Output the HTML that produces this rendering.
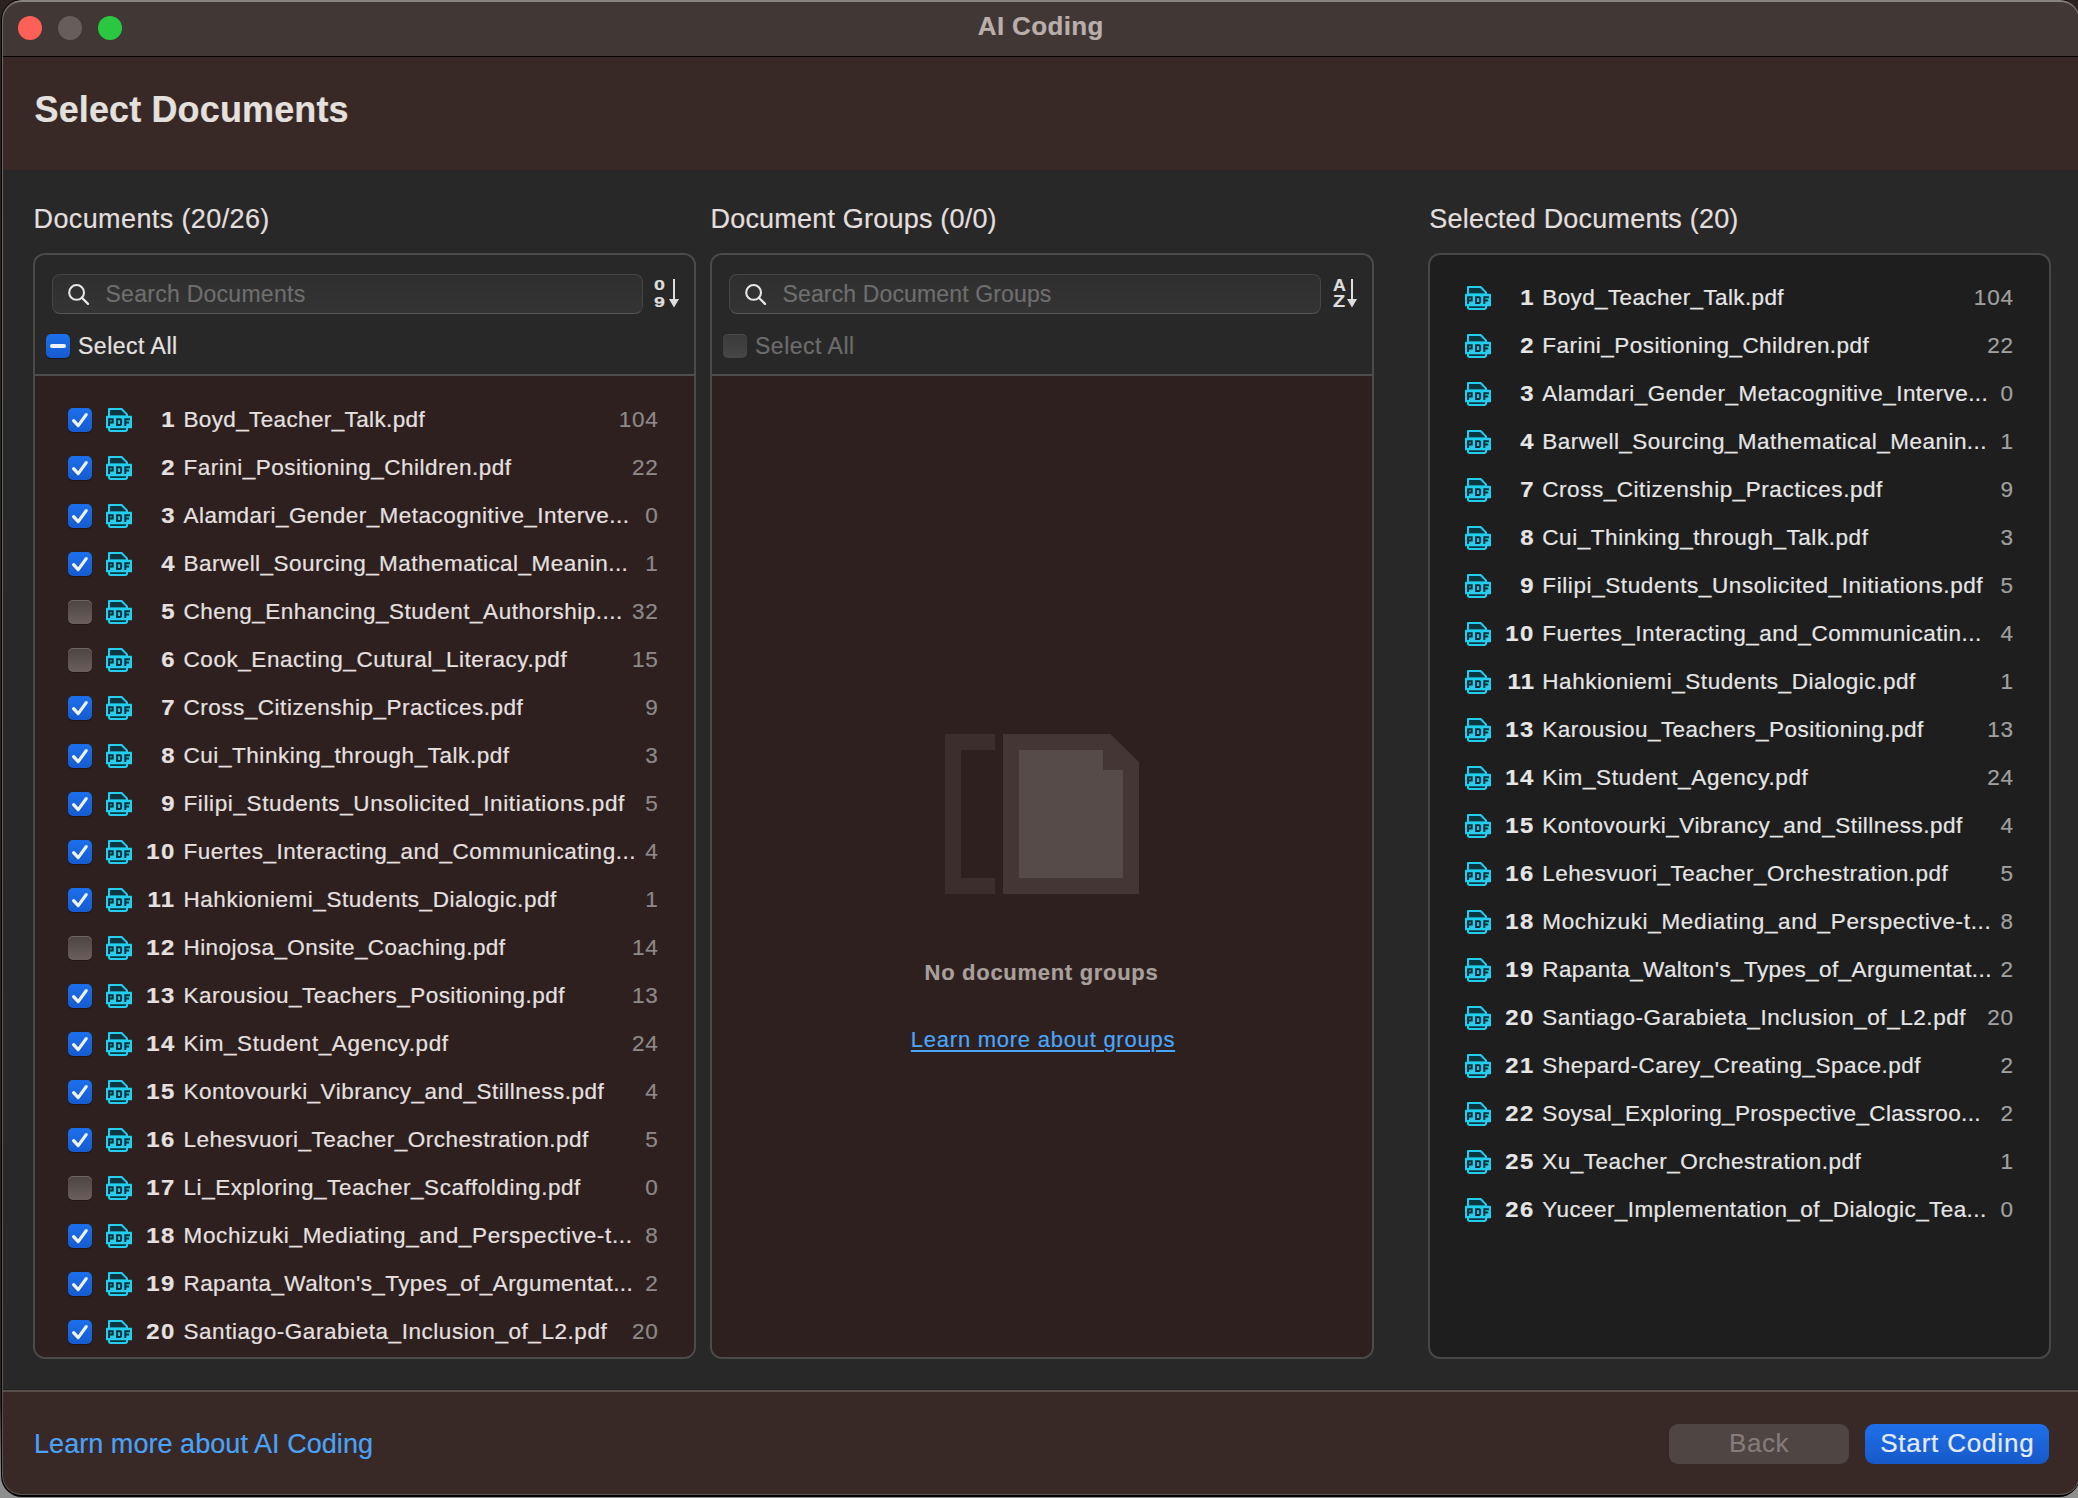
<!DOCTYPE html><html><head><meta charset="utf-8"><title>AI Coding</title><style>
html,body{margin:0;padding:0;}
body{width:2078px;height:1498px;overflow:hidden;position:relative;background:linear-gradient(#2b2320 0,#2b2320 1400px,#8e8e8e 1480px);font-family:"Liberation Sans", sans-serif;}
.t{position:absolute;white-space:pre;-webkit-text-stroke:0.2px currentColor;}
#winblack{position:absolute;left:0.8px;top:-1px;width:2079px;height:1497.5px;background:#000;border-radius:21px;}
#win{position:absolute;left:2px;top:0px;width:2078px;height:1495px;border-radius:20px;overflow:hidden;background:linear-gradient(#8a8481 0px,#8a8481 2px,#6f6764 3px,#5d5452 100%);}
#titlebar{position:absolute;left:3px;top:1.5px;width:2076px;height:54.5px;background:#413735;border-radius:19px 19px 0 0;}
#tbline{position:absolute;left:3px;top:56px;width:2076px;height:1px;background:#050404;}
#header{position:absolute;left:3px;top:57px;width:2076px;height:113px;background:#382927;}
#content{position:absolute;left:3px;top:170px;width:2076px;height:1219px;background:#282828;}
#ftsep1{position:absolute;left:3px;top:1389px;width:2076px;height:1px;background:#232222;}
#ftsep2{position:absolute;left:3px;top:1390px;width:2076px;height:2px;background:#574d4a;}
#footer{position:absolute;left:3px;top:1392px;width:2076px;height:101.5px;background:#382826;border-radius:0 0 19px 19px;}
.tl{position:absolute;width:24px;height:24px;border-radius:12px;}
.panel{position:absolute;box-sizing:border-box;border:2px solid #4d4b4a;border-radius:12px;overflow:hidden;background:#282828;}
.panel .ptop{position:absolute;left:0;top:0;right:0;height:119px;background:#282828;}
.panel .plist{position:absolute;left:0;top:119px;right:0;bottom:0;background:#2e201f;border-top:2px solid #4e4e4e;}
.panel.p3{background:#1e1e1e;border-color:#474747;}
.search{position:absolute;box-sizing:border-box;height:40px;border-radius:8px;background:linear-gradient(#2f2f2f,#343434);border:1.5px solid #454545;border-bottom-color:#555;}
.cb{position:absolute;width:24px;height:24px;border-radius:5px;box-sizing:border-box;}
.cb svg{position:absolute;left:0;top:0;}
.cb.on,.cb.mixed{background:linear-gradient(#1c70ec,#165bcf);box-shadow:0 0.5px 1px rgba(0,0,0,0.4);}
.cb.off{background:linear-gradient(#4d4442,#6a5f5d);box-shadow:inset 0 1px 0 #6e6462, 0 0.5px 1px rgba(0,0,0,0.3);}
.cb.dis{background:linear-gradient(#3a3a3a,#474747);box-shadow:inset 0 1px 0 #4a4a4a;}
.dash{position:absolute;left:4px;top:10px;width:16px;height:4px;border-radius:2px;background:#eef2fa;}
.pdf{position:absolute;left:0;top:0;}
.btn{position:absolute;border-radius:9px;}
.btn.back{background:#4f4543;}
.btn.start{background:linear-gradient(#1f6fea,#1659c8);}
</style></head><body><div id="winblack"></div><div id="win"></div><div id="titlebar"></div><div id="tbline"></div><div id="header"></div><div id="content"></div><div id="ftsep1"></div><div id="ftsep2"></div><div id="footer"></div><div class="tl" style="left:18px;top:16px;background:#fe5f57"></div><div class="tl" style="left:58px;top:16px;background:#675e5c"></div><div class="tl" style="left:98px;top:16px;background:#29c840"></div><div class="t" style="left:440.80px;width:1200px;text-align:center;top:13.29px;font-size:26px;line-height:26px;color:#b9aeab;font-weight:700;letter-spacing:0.37px;">AI Coding</div><div class="t" style="left:34.50px;top:92.13px;font-size:36px;line-height:36px;color:#e4e0de;font-weight:700;letter-spacing:0.13px;">Select Documents</div><div class="t" style="left:33.50px;top:206.04px;font-size:27px;line-height:27px;color:#e2dfde;font-weight:400;letter-spacing:0.39px;">Documents (20/26)</div><div class="t" style="left:710.50px;top:206.04px;font-size:27px;line-height:27px;color:#e2dfde;font-weight:400;letter-spacing:0.2px;">Document Groups (0/0)</div><div class="t" style="left:1429.30px;top:206.04px;font-size:27px;line-height:27px;color:#e2dfde;font-weight:400;letter-spacing:0.2px;">Selected Documents (20)</div><div class="panel" style="left:33px;top:253px;width:663px;height:1106px"><div class="ptop"></div><div class="plist"></div></div><div class="panel" style="left:710px;top:253px;width:664px;height:1106px"><div class="ptop"></div><div class="plist"></div></div><div class="panel p3" style="left:1427.5px;top:253px;width:623px;height:1106px"></div><div class="search" style="left:52px;top:274px;width:591px;"></div><div class="search" style="left:729px;top:274px;width:592px;"></div><svg width="24" height="24" viewBox="0 0 24 24" style="position:absolute;left:67px;top:283px"><circle cx="9.6" cy="9.4" r="7.4" fill="none" stroke="#e6e6e6" stroke-width="2.1"/><path d="M14.9,14.8 L21,20.9" stroke="#e6e6e6" stroke-width="2.3" stroke-linecap="round"/></svg><svg width="24" height="24" viewBox="0 0 24 24" style="position:absolute;left:744px;top:283px"><circle cx="9.6" cy="9.4" r="7.4" fill="none" stroke="#e6e6e6" stroke-width="2.1"/><path d="M14.9,14.8 L21,20.9" stroke="#e6e6e6" stroke-width="2.3" stroke-linecap="round"/></svg><div class="t" style="left:105.50px;top:282.93px;font-size:23px;line-height:23px;color:#6e6e6e;font-weight:400;letter-spacing:0.27px;">Search Documents</div><div class="t" style="left:782.50px;top:282.93px;font-size:23px;line-height:23px;color:#6e6e6e;font-weight:400;letter-spacing:0.14px;">Search Document Groups</div><div class="t" style="left:654.20px;top:277.38px;font-size:15.5px;line-height:15.5px;color:#dedede;font-weight:700;letter-spacing:0px;transform:scaleX(1.27);transform-origin:0 0;">0</div><div class="t" style="left:654.20px;top:294.08px;font-size:15.5px;line-height:15.5px;color:#dedede;font-weight:700;letter-spacing:0px;transform:scaleX(1.27);transform-origin:0 0;">9</div><svg width="14" height="32" viewBox="0 0 14 32" style="position:absolute;left:667px;top:277px"><path d="M7,2 V24" stroke="#dedede" stroke-width="2"/><path d="M2,22 H12 L7,30.5 Z" fill="#dedede"/></svg><div class="t" style="left:1332.50px;top:277.33px;font-size:16.5px;line-height:16.5px;color:#dedede;font-weight:700;letter-spacing:0px;transform:scaleX(1.08);transform-origin:0 0;">A</div><div class="t" style="left:1332.50px;top:293.43px;font-size:16.5px;line-height:16.5px;color:#dedede;font-weight:700;letter-spacing:0px;transform:scaleX(1.2);transform-origin:0 0;">Z</div><svg width="14" height="32" viewBox="0 0 14 32" style="position:absolute;left:1345px;top:277px"><path d="M7,2 V24" stroke="#dedede" stroke-width="2"/><path d="M2,22 H12 L7,30.5 Z" fill="#dedede"/></svg><div class="cb mixed" style="left:46px;top:334px"><div class="dash"></div></div><div class="t" style="left:78.00px;top:334.53px;font-size:23px;line-height:23px;color:#e6e2e1;font-weight:400;letter-spacing:0.5px;">Select All</div><div class="cb dis" style="left:723px;top:334px"></div><div class="t" style="left:755.00px;top:334.53px;font-size:23px;line-height:23px;color:#6c6c6c;font-weight:400;letter-spacing:0.5px;">Select All</div><svg width="196" height="162" viewBox="0 0 196 162" style="position:absolute;left:945px;top:734px"><path d="M0,0 H50 V16 H16 V144 H50 V160 H0 Z" fill="#3b2e2c"/><path d="M58,0 H165.3 L194,28 V160 H58 Z" fill="#433634"/><path d="M74,16 H158 V36 H178 V144 H74 Z" fill="#564b49"/></svg><div class="t" style="left:441.50px;width:1200px;text-align:center;top:961.58px;font-size:22px;line-height:22px;color:#a9a09d;font-weight:700;letter-spacing:0.7px;">No document groups</div><div class="t" style="left:443.00px;width:1200px;text-align:center;top:1029.38px;font-size:22px;line-height:22px;color:#4aa6fb;font-weight:400;letter-spacing:0.75px;text-decoration:underline;text-decoration-thickness:2px;text-underline-offset:3px;">Learn more about groups</div><div class="t" style="left:34.00px;top:1431.34px;font-size:27px;line-height:27px;color:#4aa3f7;font-weight:400;letter-spacing:0.05px;">Learn more about AI Coding</div><div class="btn back" style="left:1669px;top:1424px;width:180px;height:40px"></div><div class="t" style="left:1159.00px;width:1200px;text-align:center;top:1430.19px;font-size:26px;line-height:26px;color:#867b78;font-weight:400;letter-spacing:0.5px;">Back</div><div class="btn start" style="left:1865px;top:1424px;width:184px;height:40px"></div><div class="t" style="left:1357.30px;width:1200px;text-align:center;top:1430.19px;font-size:26px;line-height:26px;color:#e4ebf8;font-weight:400;letter-spacing:0.81px;">Start Coding</div><div class="cb on" style="left:68px;top:408px"><svg width="24" height="24" viewBox="0 0 24 24"><path d="M5.6,12.6 L10.2,17.6 L18.2,6.6" fill="none" stroke="#eef2fa" stroke-width="3.2" stroke-linecap="round" stroke-linejoin="round"/></svg></div><div style="position:absolute;left:106px;top:408px;width:26px;height:24px"><svg class="pdf" width="26" height="24" viewBox="0 0 26 24"><path d="M3,1 H15.6 L21,6.4 V8.5 H3 Z" fill="#0b3640" stroke="#25cdee" stroke-width="2" stroke-linejoin="round"/><path d="M3,19 V21.3 Q3,23 4.7,23 H19.3 Q21,23 21,21.3 V19 Z" fill="#0b3640" stroke="#25cdee" stroke-width="2"/><rect x="0" y="7.8" width="26" height="12.4" rx="0.5" fill="#25cdee"/><path d="M3.1,18 V11.2 H6.7 V14.6 H3.1 M11.1,11.2 H14.3 L15.1,12 V16.2 L14.3,17 H11.1 Z M19.3,18 V11.2 H24 M19.3,14.5 H23.2" fill="none" stroke="#0b2f38" stroke-width="2"/></svg></div><div class="t" style="right:1903.70px;text-align:right;top:409.15px;font-size:22.5px;line-height:22.5px;color:#e6e1e0;font-weight:700;letter-spacing:1.3px;margin-right:-1.3px;transform:scaleX(1.06);transform-origin:100% 0;">1</div><div class="t" style="right:1420.20px;text-align:right;top:409.15px;font-size:22.5px;line-height:22.5px;color:#8d8988;font-weight:400;letter-spacing:0.8px;margin-right:-0.8px;">104</div><div class="t" style="left:183.50px;top:409.15px;font-size:22.5px;line-height:22.5px;color:#e6e1e0;font-weight:400;letter-spacing:0.365px;">Boyd_Teacher_Talk.pdf</div><div class="cb on" style="left:68px;top:456px"><svg width="24" height="24" viewBox="0 0 24 24"><path d="M5.6,12.6 L10.2,17.6 L18.2,6.6" fill="none" stroke="#eef2fa" stroke-width="3.2" stroke-linecap="round" stroke-linejoin="round"/></svg></div><div style="position:absolute;left:106px;top:456px;width:26px;height:24px"><svg class="pdf" width="26" height="24" viewBox="0 0 26 24"><path d="M3,1 H15.6 L21,6.4 V8.5 H3 Z" fill="#0b3640" stroke="#25cdee" stroke-width="2" stroke-linejoin="round"/><path d="M3,19 V21.3 Q3,23 4.7,23 H19.3 Q21,23 21,21.3 V19 Z" fill="#0b3640" stroke="#25cdee" stroke-width="2"/><rect x="0" y="7.8" width="26" height="12.4" rx="0.5" fill="#25cdee"/><path d="M3.1,18 V11.2 H6.7 V14.6 H3.1 M11.1,11.2 H14.3 L15.1,12 V16.2 L14.3,17 H11.1 Z M19.3,18 V11.2 H24 M19.3,14.5 H23.2" fill="none" stroke="#0b2f38" stroke-width="2"/></svg></div><div class="t" style="right:1903.70px;text-align:right;top:457.15px;font-size:22.5px;line-height:22.5px;color:#e6e1e0;font-weight:700;letter-spacing:1.3px;margin-right:-1.3px;transform:scaleX(1.06);transform-origin:100% 0;">2</div><div class="t" style="right:1420.20px;text-align:right;top:457.15px;font-size:22.5px;line-height:22.5px;color:#8d8988;font-weight:400;letter-spacing:0.8px;margin-right:-0.8px;">22</div><div class="t" style="left:183.50px;top:457.15px;font-size:22.5px;line-height:22.5px;color:#e6e1e0;font-weight:400;letter-spacing:0.493px;">Farini_Positioning_Children.pdf</div><div class="cb on" style="left:68px;top:504px"><svg width="24" height="24" viewBox="0 0 24 24"><path d="M5.6,12.6 L10.2,17.6 L18.2,6.6" fill="none" stroke="#eef2fa" stroke-width="3.2" stroke-linecap="round" stroke-linejoin="round"/></svg></div><div style="position:absolute;left:106px;top:504px;width:26px;height:24px"><svg class="pdf" width="26" height="24" viewBox="0 0 26 24"><path d="M3,1 H15.6 L21,6.4 V8.5 H3 Z" fill="#0b3640" stroke="#25cdee" stroke-width="2" stroke-linejoin="round"/><path d="M3,19 V21.3 Q3,23 4.7,23 H19.3 Q21,23 21,21.3 V19 Z" fill="#0b3640" stroke="#25cdee" stroke-width="2"/><rect x="0" y="7.8" width="26" height="12.4" rx="0.5" fill="#25cdee"/><path d="M3.1,18 V11.2 H6.7 V14.6 H3.1 M11.1,11.2 H14.3 L15.1,12 V16.2 L14.3,17 H11.1 Z M19.3,18 V11.2 H24 M19.3,14.5 H23.2" fill="none" stroke="#0b2f38" stroke-width="2"/></svg></div><div class="t" style="right:1903.70px;text-align:right;top:505.15px;font-size:22.5px;line-height:22.5px;color:#e6e1e0;font-weight:700;letter-spacing:1.3px;margin-right:-1.3px;transform:scaleX(1.06);transform-origin:100% 0;">3</div><div class="t" style="right:1420.20px;text-align:right;top:505.15px;font-size:22.5px;line-height:22.5px;color:#8d8988;font-weight:400;letter-spacing:0.8px;margin-right:-0.8px;">0</div><div class="t" style="left:183.50px;top:505.15px;font-size:22.5px;line-height:22.5px;color:#e6e1e0;font-weight:400;letter-spacing:0.454px;">Alamdari_Gender_Metacognitive_Interve...</div><div class="cb on" style="left:68px;top:552px"><svg width="24" height="24" viewBox="0 0 24 24"><path d="M5.6,12.6 L10.2,17.6 L18.2,6.6" fill="none" stroke="#eef2fa" stroke-width="3.2" stroke-linecap="round" stroke-linejoin="round"/></svg></div><div style="position:absolute;left:106px;top:552px;width:26px;height:24px"><svg class="pdf" width="26" height="24" viewBox="0 0 26 24"><path d="M3,1 H15.6 L21,6.4 V8.5 H3 Z" fill="#0b3640" stroke="#25cdee" stroke-width="2" stroke-linejoin="round"/><path d="M3,19 V21.3 Q3,23 4.7,23 H19.3 Q21,23 21,21.3 V19 Z" fill="#0b3640" stroke="#25cdee" stroke-width="2"/><rect x="0" y="7.8" width="26" height="12.4" rx="0.5" fill="#25cdee"/><path d="M3.1,18 V11.2 H6.7 V14.6 H3.1 M11.1,11.2 H14.3 L15.1,12 V16.2 L14.3,17 H11.1 Z M19.3,18 V11.2 H24 M19.3,14.5 H23.2" fill="none" stroke="#0b2f38" stroke-width="2"/></svg></div><div class="t" style="right:1903.70px;text-align:right;top:553.15px;font-size:22.5px;line-height:22.5px;color:#e6e1e0;font-weight:700;letter-spacing:1.3px;margin-right:-1.3px;transform:scaleX(1.06);transform-origin:100% 0;">4</div><div class="t" style="right:1420.20px;text-align:right;top:553.15px;font-size:22.5px;line-height:22.5px;color:#8d8988;font-weight:400;letter-spacing:0.8px;margin-right:-0.8px;">1</div><div class="t" style="left:183.50px;top:553.15px;font-size:22.5px;line-height:22.5px;color:#e6e1e0;font-weight:400;letter-spacing:0.471px;">Barwell_Sourcing_Mathematical_Meanin...</div><div class="cb off" style="left:68px;top:600px"></div><div style="position:absolute;left:106px;top:600px;width:26px;height:24px"><svg class="pdf" width="26" height="24" viewBox="0 0 26 24"><path d="M3,1 H15.6 L21,6.4 V8.5 H3 Z" fill="#0b3640" stroke="#25cdee" stroke-width="2" stroke-linejoin="round"/><path d="M3,19 V21.3 Q3,23 4.7,23 H19.3 Q21,23 21,21.3 V19 Z" fill="#0b3640" stroke="#25cdee" stroke-width="2"/><rect x="0" y="7.8" width="26" height="12.4" rx="0.5" fill="#25cdee"/><path d="M3.1,18 V11.2 H6.7 V14.6 H3.1 M11.1,11.2 H14.3 L15.1,12 V16.2 L14.3,17 H11.1 Z M19.3,18 V11.2 H24 M19.3,14.5 H23.2" fill="none" stroke="#0b2f38" stroke-width="2"/></svg></div><div class="t" style="right:1903.70px;text-align:right;top:601.15px;font-size:22.5px;line-height:22.5px;color:#e6e1e0;font-weight:700;letter-spacing:1.3px;margin-right:-1.3px;transform:scaleX(1.06);transform-origin:100% 0;">5</div><div class="t" style="right:1420.20px;text-align:right;top:601.15px;font-size:22.5px;line-height:22.5px;color:#8d8988;font-weight:400;letter-spacing:0.8px;margin-right:-0.8px;">32</div><div class="t" style="left:183.50px;top:601.15px;font-size:22.5px;line-height:22.5px;color:#e6e1e0;font-weight:400;letter-spacing:0.495px;">Cheng_Enhancing_Student_Authorship....</div><div class="cb off" style="left:68px;top:648px"></div><div style="position:absolute;left:106px;top:648px;width:26px;height:24px"><svg class="pdf" width="26" height="24" viewBox="0 0 26 24"><path d="M3,1 H15.6 L21,6.4 V8.5 H3 Z" fill="#0b3640" stroke="#25cdee" stroke-width="2" stroke-linejoin="round"/><path d="M3,19 V21.3 Q3,23 4.7,23 H19.3 Q21,23 21,21.3 V19 Z" fill="#0b3640" stroke="#25cdee" stroke-width="2"/><rect x="0" y="7.8" width="26" height="12.4" rx="0.5" fill="#25cdee"/><path d="M3.1,18 V11.2 H6.7 V14.6 H3.1 M11.1,11.2 H14.3 L15.1,12 V16.2 L14.3,17 H11.1 Z M19.3,18 V11.2 H24 M19.3,14.5 H23.2" fill="none" stroke="#0b2f38" stroke-width="2"/></svg></div><div class="t" style="right:1903.70px;text-align:right;top:649.15px;font-size:22.5px;line-height:22.5px;color:#e6e1e0;font-weight:700;letter-spacing:1.3px;margin-right:-1.3px;transform:scaleX(1.06);transform-origin:100% 0;">6</div><div class="t" style="right:1420.20px;text-align:right;top:649.15px;font-size:22.5px;line-height:22.5px;color:#8d8988;font-weight:400;letter-spacing:0.8px;margin-right:-0.8px;">15</div><div class="t" style="left:183.50px;top:649.15px;font-size:22.5px;line-height:22.5px;color:#e6e1e0;font-weight:400;letter-spacing:0.557px;">Cook_Enacting_Cutural_Literacy.pdf</div><div class="cb on" style="left:68px;top:696px"><svg width="24" height="24" viewBox="0 0 24 24"><path d="M5.6,12.6 L10.2,17.6 L18.2,6.6" fill="none" stroke="#eef2fa" stroke-width="3.2" stroke-linecap="round" stroke-linejoin="round"/></svg></div><div style="position:absolute;left:106px;top:696px;width:26px;height:24px"><svg class="pdf" width="26" height="24" viewBox="0 0 26 24"><path d="M3,1 H15.6 L21,6.4 V8.5 H3 Z" fill="#0b3640" stroke="#25cdee" stroke-width="2" stroke-linejoin="round"/><path d="M3,19 V21.3 Q3,23 4.7,23 H19.3 Q21,23 21,21.3 V19 Z" fill="#0b3640" stroke="#25cdee" stroke-width="2"/><rect x="0" y="7.8" width="26" height="12.4" rx="0.5" fill="#25cdee"/><path d="M3.1,18 V11.2 H6.7 V14.6 H3.1 M11.1,11.2 H14.3 L15.1,12 V16.2 L14.3,17 H11.1 Z M19.3,18 V11.2 H24 M19.3,14.5 H23.2" fill="none" stroke="#0b2f38" stroke-width="2"/></svg></div><div class="t" style="right:1903.70px;text-align:right;top:697.15px;font-size:22.5px;line-height:22.5px;color:#e6e1e0;font-weight:700;letter-spacing:1.3px;margin-right:-1.3px;transform:scaleX(1.06);transform-origin:100% 0;">7</div><div class="t" style="right:1420.20px;text-align:right;top:697.15px;font-size:22.5px;line-height:22.5px;color:#8d8988;font-weight:400;letter-spacing:0.8px;margin-right:-0.8px;">9</div><div class="t" style="left:183.50px;top:697.15px;font-size:22.5px;line-height:22.5px;color:#e6e1e0;font-weight:400;letter-spacing:0.513px;">Cross_Citizenship_Practices.pdf</div><div class="cb on" style="left:68px;top:744px"><svg width="24" height="24" viewBox="0 0 24 24"><path d="M5.6,12.6 L10.2,17.6 L18.2,6.6" fill="none" stroke="#eef2fa" stroke-width="3.2" stroke-linecap="round" stroke-linejoin="round"/></svg></div><div style="position:absolute;left:106px;top:744px;width:26px;height:24px"><svg class="pdf" width="26" height="24" viewBox="0 0 26 24"><path d="M3,1 H15.6 L21,6.4 V8.5 H3 Z" fill="#0b3640" stroke="#25cdee" stroke-width="2" stroke-linejoin="round"/><path d="M3,19 V21.3 Q3,23 4.7,23 H19.3 Q21,23 21,21.3 V19 Z" fill="#0b3640" stroke="#25cdee" stroke-width="2"/><rect x="0" y="7.8" width="26" height="12.4" rx="0.5" fill="#25cdee"/><path d="M3.1,18 V11.2 H6.7 V14.6 H3.1 M11.1,11.2 H14.3 L15.1,12 V16.2 L14.3,17 H11.1 Z M19.3,18 V11.2 H24 M19.3,14.5 H23.2" fill="none" stroke="#0b2f38" stroke-width="2"/></svg></div><div class="t" style="right:1903.70px;text-align:right;top:745.15px;font-size:22.5px;line-height:22.5px;color:#e6e1e0;font-weight:700;letter-spacing:1.3px;margin-right:-1.3px;transform:scaleX(1.06);transform-origin:100% 0;">8</div><div class="t" style="right:1420.20px;text-align:right;top:745.15px;font-size:22.5px;line-height:22.5px;color:#8d8988;font-weight:400;letter-spacing:0.8px;margin-right:-0.8px;">3</div><div class="t" style="left:183.50px;top:745.15px;font-size:22.5px;line-height:22.5px;color:#e6e1e0;font-weight:400;letter-spacing:0.55px;">Cui_Thinking_through_Talk.pdf</div><div class="cb on" style="left:68px;top:792px"><svg width="24" height="24" viewBox="0 0 24 24"><path d="M5.6,12.6 L10.2,17.6 L18.2,6.6" fill="none" stroke="#eef2fa" stroke-width="3.2" stroke-linecap="round" stroke-linejoin="round"/></svg></div><div style="position:absolute;left:106px;top:792px;width:26px;height:24px"><svg class="pdf" width="26" height="24" viewBox="0 0 26 24"><path d="M3,1 H15.6 L21,6.4 V8.5 H3 Z" fill="#0b3640" stroke="#25cdee" stroke-width="2" stroke-linejoin="round"/><path d="M3,19 V21.3 Q3,23 4.7,23 H19.3 Q21,23 21,21.3 V19 Z" fill="#0b3640" stroke="#25cdee" stroke-width="2"/><rect x="0" y="7.8" width="26" height="12.4" rx="0.5" fill="#25cdee"/><path d="M3.1,18 V11.2 H6.7 V14.6 H3.1 M11.1,11.2 H14.3 L15.1,12 V16.2 L14.3,17 H11.1 Z M19.3,18 V11.2 H24 M19.3,14.5 H23.2" fill="none" stroke="#0b2f38" stroke-width="2"/></svg></div><div class="t" style="right:1903.70px;text-align:right;top:793.15px;font-size:22.5px;line-height:22.5px;color:#e6e1e0;font-weight:700;letter-spacing:1.3px;margin-right:-1.3px;transform:scaleX(1.06);transform-origin:100% 0;">9</div><div class="t" style="right:1420.20px;text-align:right;top:793.15px;font-size:22.5px;line-height:22.5px;color:#8d8988;font-weight:400;letter-spacing:0.8px;margin-right:-0.8px;">5</div><div class="t" style="left:183.50px;top:793.15px;font-size:22.5px;line-height:22.5px;color:#e6e1e0;font-weight:400;letter-spacing:0.609px;">Filipi_Students_Unsolicited_Initiations.pdf</div><div class="cb on" style="left:68px;top:840px"><svg width="24" height="24" viewBox="0 0 24 24"><path d="M5.6,12.6 L10.2,17.6 L18.2,6.6" fill="none" stroke="#eef2fa" stroke-width="3.2" stroke-linecap="round" stroke-linejoin="round"/></svg></div><div style="position:absolute;left:106px;top:840px;width:26px;height:24px"><svg class="pdf" width="26" height="24" viewBox="0 0 26 24"><path d="M3,1 H15.6 L21,6.4 V8.5 H3 Z" fill="#0b3640" stroke="#25cdee" stroke-width="2" stroke-linejoin="round"/><path d="M3,19 V21.3 Q3,23 4.7,23 H19.3 Q21,23 21,21.3 V19 Z" fill="#0b3640" stroke="#25cdee" stroke-width="2"/><rect x="0" y="7.8" width="26" height="12.4" rx="0.5" fill="#25cdee"/><path d="M3.1,18 V11.2 H6.7 V14.6 H3.1 M11.1,11.2 H14.3 L15.1,12 V16.2 L14.3,17 H11.1 Z M19.3,18 V11.2 H24 M19.3,14.5 H23.2" fill="none" stroke="#0b2f38" stroke-width="2"/></svg></div><div class="t" style="right:1903.70px;text-align:right;top:841.15px;font-size:22.5px;line-height:22.5px;color:#e6e1e0;font-weight:700;letter-spacing:1.3px;margin-right:-1.3px;transform:scaleX(1.06);transform-origin:100% 0;">10</div><div class="t" style="right:1420.20px;text-align:right;top:841.15px;font-size:22.5px;line-height:22.5px;color:#8d8988;font-weight:400;letter-spacing:0.8px;margin-right:-0.8px;">4</div><div class="t" style="left:183.50px;top:841.15px;font-size:22.5px;line-height:22.5px;color:#e6e1e0;font-weight:400;letter-spacing:0.526px;">Fuertes_Interacting_and_Communicating...</div><div class="cb on" style="left:68px;top:888px"><svg width="24" height="24" viewBox="0 0 24 24"><path d="M5.6,12.6 L10.2,17.6 L18.2,6.6" fill="none" stroke="#eef2fa" stroke-width="3.2" stroke-linecap="round" stroke-linejoin="round"/></svg></div><div style="position:absolute;left:106px;top:888px;width:26px;height:24px"><svg class="pdf" width="26" height="24" viewBox="0 0 26 24"><path d="M3,1 H15.6 L21,6.4 V8.5 H3 Z" fill="#0b3640" stroke="#25cdee" stroke-width="2" stroke-linejoin="round"/><path d="M3,19 V21.3 Q3,23 4.7,23 H19.3 Q21,23 21,21.3 V19 Z" fill="#0b3640" stroke="#25cdee" stroke-width="2"/><rect x="0" y="7.8" width="26" height="12.4" rx="0.5" fill="#25cdee"/><path d="M3.1,18 V11.2 H6.7 V14.6 H3.1 M11.1,11.2 H14.3 L15.1,12 V16.2 L14.3,17 H11.1 Z M19.3,18 V11.2 H24 M19.3,14.5 H23.2" fill="none" stroke="#0b2f38" stroke-width="2"/></svg></div><div class="t" style="right:1903.70px;text-align:right;top:889.15px;font-size:22.5px;line-height:22.5px;color:#e6e1e0;font-weight:700;letter-spacing:1.3px;margin-right:-1.3px;transform:scaleX(1.06);transform-origin:100% 0;">11</div><div class="t" style="right:1420.20px;text-align:right;top:889.15px;font-size:22.5px;line-height:22.5px;color:#8d8988;font-weight:400;letter-spacing:0.8px;margin-right:-0.8px;">1</div><div class="t" style="left:183.50px;top:889.15px;font-size:22.5px;line-height:22.5px;color:#e6e1e0;font-weight:400;letter-spacing:0.549px;">Hahkioniemi_Students_Dialogic.pdf</div><div class="cb off" style="left:68px;top:936px"></div><div style="position:absolute;left:106px;top:936px;width:26px;height:24px"><svg class="pdf" width="26" height="24" viewBox="0 0 26 24"><path d="M3,1 H15.6 L21,6.4 V8.5 H3 Z" fill="#0b3640" stroke="#25cdee" stroke-width="2" stroke-linejoin="round"/><path d="M3,19 V21.3 Q3,23 4.7,23 H19.3 Q21,23 21,21.3 V19 Z" fill="#0b3640" stroke="#25cdee" stroke-width="2"/><rect x="0" y="7.8" width="26" height="12.4" rx="0.5" fill="#25cdee"/><path d="M3.1,18 V11.2 H6.7 V14.6 H3.1 M11.1,11.2 H14.3 L15.1,12 V16.2 L14.3,17 H11.1 Z M19.3,18 V11.2 H24 M19.3,14.5 H23.2" fill="none" stroke="#0b2f38" stroke-width="2"/></svg></div><div class="t" style="right:1903.70px;text-align:right;top:937.15px;font-size:22.5px;line-height:22.5px;color:#e6e1e0;font-weight:700;letter-spacing:1.3px;margin-right:-1.3px;transform:scaleX(1.06);transform-origin:100% 0;">12</div><div class="t" style="right:1420.20px;text-align:right;top:937.15px;font-size:22.5px;line-height:22.5px;color:#8d8988;font-weight:400;letter-spacing:0.8px;margin-right:-0.8px;">14</div><div class="t" style="left:183.50px;top:937.15px;font-size:22.5px;line-height:22.5px;color:#e6e1e0;font-weight:400;letter-spacing:0.419px;">Hinojosa_Onsite_Coaching.pdf</div><div class="cb on" style="left:68px;top:984px"><svg width="24" height="24" viewBox="0 0 24 24"><path d="M5.6,12.6 L10.2,17.6 L18.2,6.6" fill="none" stroke="#eef2fa" stroke-width="3.2" stroke-linecap="round" stroke-linejoin="round"/></svg></div><div style="position:absolute;left:106px;top:984px;width:26px;height:24px"><svg class="pdf" width="26" height="24" viewBox="0 0 26 24"><path d="M3,1 H15.6 L21,6.4 V8.5 H3 Z" fill="#0b3640" stroke="#25cdee" stroke-width="2" stroke-linejoin="round"/><path d="M3,19 V21.3 Q3,23 4.7,23 H19.3 Q21,23 21,21.3 V19 Z" fill="#0b3640" stroke="#25cdee" stroke-width="2"/><rect x="0" y="7.8" width="26" height="12.4" rx="0.5" fill="#25cdee"/><path d="M3.1,18 V11.2 H6.7 V14.6 H3.1 M11.1,11.2 H14.3 L15.1,12 V16.2 L14.3,17 H11.1 Z M19.3,18 V11.2 H24 M19.3,14.5 H23.2" fill="none" stroke="#0b2f38" stroke-width="2"/></svg></div><div class="t" style="right:1903.70px;text-align:right;top:985.15px;font-size:22.5px;line-height:22.5px;color:#e6e1e0;font-weight:700;letter-spacing:1.3px;margin-right:-1.3px;transform:scaleX(1.06);transform-origin:100% 0;">13</div><div class="t" style="right:1420.20px;text-align:right;top:985.15px;font-size:22.5px;line-height:22.5px;color:#8d8988;font-weight:400;letter-spacing:0.8px;margin-right:-0.8px;">13</div><div class="t" style="left:183.50px;top:985.15px;font-size:22.5px;line-height:22.5px;color:#e6e1e0;font-weight:400;letter-spacing:0.475px;">Karousiou_Teachers_Positioning.pdf</div><div class="cb on" style="left:68px;top:1032px"><svg width="24" height="24" viewBox="0 0 24 24"><path d="M5.6,12.6 L10.2,17.6 L18.2,6.6" fill="none" stroke="#eef2fa" stroke-width="3.2" stroke-linecap="round" stroke-linejoin="round"/></svg></div><div style="position:absolute;left:106px;top:1032px;width:26px;height:24px"><svg class="pdf" width="26" height="24" viewBox="0 0 26 24"><path d="M3,1 H15.6 L21,6.4 V8.5 H3 Z" fill="#0b3640" stroke="#25cdee" stroke-width="2" stroke-linejoin="round"/><path d="M3,19 V21.3 Q3,23 4.7,23 H19.3 Q21,23 21,21.3 V19 Z" fill="#0b3640" stroke="#25cdee" stroke-width="2"/><rect x="0" y="7.8" width="26" height="12.4" rx="0.5" fill="#25cdee"/><path d="M3.1,18 V11.2 H6.7 V14.6 H3.1 M11.1,11.2 H14.3 L15.1,12 V16.2 L14.3,17 H11.1 Z M19.3,18 V11.2 H24 M19.3,14.5 H23.2" fill="none" stroke="#0b2f38" stroke-width="2"/></svg></div><div class="t" style="right:1903.70px;text-align:right;top:1033.15px;font-size:22.5px;line-height:22.5px;color:#e6e1e0;font-weight:700;letter-spacing:1.3px;margin-right:-1.3px;transform:scaleX(1.06);transform-origin:100% 0;">14</div><div class="t" style="right:1420.20px;text-align:right;top:1033.15px;font-size:22.5px;line-height:22.5px;color:#8d8988;font-weight:400;letter-spacing:0.8px;margin-right:-0.8px;">24</div><div class="t" style="left:183.50px;top:1033.15px;font-size:22.5px;line-height:22.5px;color:#e6e1e0;font-weight:400;letter-spacing:0.586px;">Kim_Student_Agency.pdf</div><div class="cb on" style="left:68px;top:1080px"><svg width="24" height="24" viewBox="0 0 24 24"><path d="M5.6,12.6 L10.2,17.6 L18.2,6.6" fill="none" stroke="#eef2fa" stroke-width="3.2" stroke-linecap="round" stroke-linejoin="round"/></svg></div><div style="position:absolute;left:106px;top:1080px;width:26px;height:24px"><svg class="pdf" width="26" height="24" viewBox="0 0 26 24"><path d="M3,1 H15.6 L21,6.4 V8.5 H3 Z" fill="#0b3640" stroke="#25cdee" stroke-width="2" stroke-linejoin="round"/><path d="M3,19 V21.3 Q3,23 4.7,23 H19.3 Q21,23 21,21.3 V19 Z" fill="#0b3640" stroke="#25cdee" stroke-width="2"/><rect x="0" y="7.8" width="26" height="12.4" rx="0.5" fill="#25cdee"/><path d="M3.1,18 V11.2 H6.7 V14.6 H3.1 M11.1,11.2 H14.3 L15.1,12 V16.2 L14.3,17 H11.1 Z M19.3,18 V11.2 H24 M19.3,14.5 H23.2" fill="none" stroke="#0b2f38" stroke-width="2"/></svg></div><div class="t" style="right:1903.70px;text-align:right;top:1081.15px;font-size:22.5px;line-height:22.5px;color:#e6e1e0;font-weight:700;letter-spacing:1.3px;margin-right:-1.3px;transform:scaleX(1.06);transform-origin:100% 0;">15</div><div class="t" style="right:1420.20px;text-align:right;top:1081.15px;font-size:22.5px;line-height:22.5px;color:#8d8988;font-weight:400;letter-spacing:0.8px;margin-right:-0.8px;">4</div><div class="t" style="left:183.50px;top:1081.15px;font-size:22.5px;line-height:22.5px;color:#e6e1e0;font-weight:400;letter-spacing:0.481px;">Kontovourki_Vibrancy_and_Stillness.pdf</div><div class="cb on" style="left:68px;top:1128px"><svg width="24" height="24" viewBox="0 0 24 24"><path d="M5.6,12.6 L10.2,17.6 L18.2,6.6" fill="none" stroke="#eef2fa" stroke-width="3.2" stroke-linecap="round" stroke-linejoin="round"/></svg></div><div style="position:absolute;left:106px;top:1128px;width:26px;height:24px"><svg class="pdf" width="26" height="24" viewBox="0 0 26 24"><path d="M3,1 H15.6 L21,6.4 V8.5 H3 Z" fill="#0b3640" stroke="#25cdee" stroke-width="2" stroke-linejoin="round"/><path d="M3,19 V21.3 Q3,23 4.7,23 H19.3 Q21,23 21,21.3 V19 Z" fill="#0b3640" stroke="#25cdee" stroke-width="2"/><rect x="0" y="7.8" width="26" height="12.4" rx="0.5" fill="#25cdee"/><path d="M3.1,18 V11.2 H6.7 V14.6 H3.1 M11.1,11.2 H14.3 L15.1,12 V16.2 L14.3,17 H11.1 Z M19.3,18 V11.2 H24 M19.3,14.5 H23.2" fill="none" stroke="#0b2f38" stroke-width="2"/></svg></div><div class="t" style="right:1903.70px;text-align:right;top:1129.15px;font-size:22.5px;line-height:22.5px;color:#e6e1e0;font-weight:700;letter-spacing:1.3px;margin-right:-1.3px;transform:scaleX(1.06);transform-origin:100% 0;">16</div><div class="t" style="right:1420.20px;text-align:right;top:1129.15px;font-size:22.5px;line-height:22.5px;color:#8d8988;font-weight:400;letter-spacing:0.8px;margin-right:-0.8px;">5</div><div class="t" style="left:183.50px;top:1129.15px;font-size:22.5px;line-height:22.5px;color:#e6e1e0;font-weight:400;letter-spacing:0.483px;">Lehesvuori_Teacher_Orchestration.pdf</div><div class="cb off" style="left:68px;top:1176px"></div><div style="position:absolute;left:106px;top:1176px;width:26px;height:24px"><svg class="pdf" width="26" height="24" viewBox="0 0 26 24"><path d="M3,1 H15.6 L21,6.4 V8.5 H3 Z" fill="#0b3640" stroke="#25cdee" stroke-width="2" stroke-linejoin="round"/><path d="M3,19 V21.3 Q3,23 4.7,23 H19.3 Q21,23 21,21.3 V19 Z" fill="#0b3640" stroke="#25cdee" stroke-width="2"/><rect x="0" y="7.8" width="26" height="12.4" rx="0.5" fill="#25cdee"/><path d="M3.1,18 V11.2 H6.7 V14.6 H3.1 M11.1,11.2 H14.3 L15.1,12 V16.2 L14.3,17 H11.1 Z M19.3,18 V11.2 H24 M19.3,14.5 H23.2" fill="none" stroke="#0b2f38" stroke-width="2"/></svg></div><div class="t" style="right:1903.70px;text-align:right;top:1177.15px;font-size:22.5px;line-height:22.5px;color:#e6e1e0;font-weight:700;letter-spacing:1.3px;margin-right:-1.3px;transform:scaleX(1.06);transform-origin:100% 0;">17</div><div class="t" style="right:1420.20px;text-align:right;top:1177.15px;font-size:22.5px;line-height:22.5px;color:#8d8988;font-weight:400;letter-spacing:0.8px;margin-right:-0.8px;">0</div><div class="t" style="left:183.50px;top:1177.15px;font-size:22.5px;line-height:22.5px;color:#e6e1e0;font-weight:400;letter-spacing:0.557px;">Li_Exploring_Teacher_Scaffolding.pdf</div><div class="cb on" style="left:68px;top:1224px"><svg width="24" height="24" viewBox="0 0 24 24"><path d="M5.6,12.6 L10.2,17.6 L18.2,6.6" fill="none" stroke="#eef2fa" stroke-width="3.2" stroke-linecap="round" stroke-linejoin="round"/></svg></div><div style="position:absolute;left:106px;top:1224px;width:26px;height:24px"><svg class="pdf" width="26" height="24" viewBox="0 0 26 24"><path d="M3,1 H15.6 L21,6.4 V8.5 H3 Z" fill="#0b3640" stroke="#25cdee" stroke-width="2" stroke-linejoin="round"/><path d="M3,19 V21.3 Q3,23 4.7,23 H19.3 Q21,23 21,21.3 V19 Z" fill="#0b3640" stroke="#25cdee" stroke-width="2"/><rect x="0" y="7.8" width="26" height="12.4" rx="0.5" fill="#25cdee"/><path d="M3.1,18 V11.2 H6.7 V14.6 H3.1 M11.1,11.2 H14.3 L15.1,12 V16.2 L14.3,17 H11.1 Z M19.3,18 V11.2 H24 M19.3,14.5 H23.2" fill="none" stroke="#0b2f38" stroke-width="2"/></svg></div><div class="t" style="right:1903.70px;text-align:right;top:1225.15px;font-size:22.5px;line-height:22.5px;color:#e6e1e0;font-weight:700;letter-spacing:1.3px;margin-right:-1.3px;transform:scaleX(1.06);transform-origin:100% 0;">18</div><div class="t" style="right:1420.20px;text-align:right;top:1225.15px;font-size:22.5px;line-height:22.5px;color:#8d8988;font-weight:400;letter-spacing:0.8px;margin-right:-0.8px;">8</div><div class="t" style="left:183.50px;top:1225.15px;font-size:22.5px;line-height:22.5px;color:#e6e1e0;font-weight:400;letter-spacing:0.66px;">Mochizuki_Mediating_and_Perspective-t...</div><div class="cb on" style="left:68px;top:1272px"><svg width="24" height="24" viewBox="0 0 24 24"><path d="M5.6,12.6 L10.2,17.6 L18.2,6.6" fill="none" stroke="#eef2fa" stroke-width="3.2" stroke-linecap="round" stroke-linejoin="round"/></svg></div><div style="position:absolute;left:106px;top:1272px;width:26px;height:24px"><svg class="pdf" width="26" height="24" viewBox="0 0 26 24"><path d="M3,1 H15.6 L21,6.4 V8.5 H3 Z" fill="#0b3640" stroke="#25cdee" stroke-width="2" stroke-linejoin="round"/><path d="M3,19 V21.3 Q3,23 4.7,23 H19.3 Q21,23 21,21.3 V19 Z" fill="#0b3640" stroke="#25cdee" stroke-width="2"/><rect x="0" y="7.8" width="26" height="12.4" rx="0.5" fill="#25cdee"/><path d="M3.1,18 V11.2 H6.7 V14.6 H3.1 M11.1,11.2 H14.3 L15.1,12 V16.2 L14.3,17 H11.1 Z M19.3,18 V11.2 H24 M19.3,14.5 H23.2" fill="none" stroke="#0b2f38" stroke-width="2"/></svg></div><div class="t" style="right:1903.70px;text-align:right;top:1273.15px;font-size:22.5px;line-height:22.5px;color:#e6e1e0;font-weight:700;letter-spacing:1.3px;margin-right:-1.3px;transform:scaleX(1.06);transform-origin:100% 0;">19</div><div class="t" style="right:1420.20px;text-align:right;top:1273.15px;font-size:22.5px;line-height:22.5px;color:#8d8988;font-weight:400;letter-spacing:0.8px;margin-right:-0.8px;">2</div><div class="t" style="left:183.50px;top:1273.15px;font-size:22.5px;line-height:22.5px;color:#e6e1e0;font-weight:400;letter-spacing:0.408px;">Rapanta_Walton&#39;s_Types_of_Argumentat...</div><div class="cb on" style="left:68px;top:1320px"><svg width="24" height="24" viewBox="0 0 24 24"><path d="M5.6,12.6 L10.2,17.6 L18.2,6.6" fill="none" stroke="#eef2fa" stroke-width="3.2" stroke-linecap="round" stroke-linejoin="round"/></svg></div><div style="position:absolute;left:106px;top:1320px;width:26px;height:24px"><svg class="pdf" width="26" height="24" viewBox="0 0 26 24"><path d="M3,1 H15.6 L21,6.4 V8.5 H3 Z" fill="#0b3640" stroke="#25cdee" stroke-width="2" stroke-linejoin="round"/><path d="M3,19 V21.3 Q3,23 4.7,23 H19.3 Q21,23 21,21.3 V19 Z" fill="#0b3640" stroke="#25cdee" stroke-width="2"/><rect x="0" y="7.8" width="26" height="12.4" rx="0.5" fill="#25cdee"/><path d="M3.1,18 V11.2 H6.7 V14.6 H3.1 M11.1,11.2 H14.3 L15.1,12 V16.2 L14.3,17 H11.1 Z M19.3,18 V11.2 H24 M19.3,14.5 H23.2" fill="none" stroke="#0b2f38" stroke-width="2"/></svg></div><div class="t" style="right:1903.70px;text-align:right;top:1321.15px;font-size:22.5px;line-height:22.5px;color:#e6e1e0;font-weight:700;letter-spacing:1.3px;margin-right:-1.3px;transform:scaleX(1.06);transform-origin:100% 0;">20</div><div class="t" style="right:1420.20px;text-align:right;top:1321.15px;font-size:22.5px;line-height:22.5px;color:#8d8988;font-weight:400;letter-spacing:0.8px;margin-right:-0.8px;">20</div><div class="t" style="left:183.50px;top:1321.15px;font-size:22.5px;line-height:22.5px;color:#e6e1e0;font-weight:400;letter-spacing:0.552px;">Santiago-Garabieta_Inclusion_of_L2.pdf</div><div style="position:absolute;left:1465px;top:286px;width:26px;height:24px"><svg class="pdf" width="26" height="24" viewBox="0 0 26 24"><path d="M3,1 H15.6 L21,6.4 V8.5 H3 Z" fill="#0b3640" stroke="#25cdee" stroke-width="2" stroke-linejoin="round"/><path d="M3,19 V21.3 Q3,23 4.7,23 H19.3 Q21,23 21,21.3 V19 Z" fill="#0b3640" stroke="#25cdee" stroke-width="2"/><rect x="0" y="7.8" width="26" height="12.4" rx="0.5" fill="#25cdee"/><path d="M3.1,18 V11.2 H6.7 V14.6 H3.1 M11.1,11.2 H14.3 L15.1,12 V16.2 L14.3,17 H11.1 Z M19.3,18 V11.2 H24 M19.3,14.5 H23.2" fill="none" stroke="#0b2f38" stroke-width="2"/></svg></div><div class="t" style="right:544.20px;text-align:right;top:287.15px;font-size:22.5px;line-height:22.5px;color:#e6e6e6;font-weight:700;letter-spacing:1.3px;margin-right:-1.3px;transform:scaleX(1.06);transform-origin:100% 0;">1</div><div class="t" style="right:65.00px;text-align:right;top:287.15px;font-size:22.5px;line-height:22.5px;color:#a0a0a0;font-weight:400;letter-spacing:0.8px;margin-right:-0.8px;">104</div><div class="t" style="left:1542.30px;top:287.15px;font-size:22.5px;line-height:22.5px;color:#e6e6e6;font-weight:400;letter-spacing:0.37px;">Boyd_Teacher_Talk.pdf</div><div style="position:absolute;left:1465px;top:334px;width:26px;height:24px"><svg class="pdf" width="26" height="24" viewBox="0 0 26 24"><path d="M3,1 H15.6 L21,6.4 V8.5 H3 Z" fill="#0b3640" stroke="#25cdee" stroke-width="2" stroke-linejoin="round"/><path d="M3,19 V21.3 Q3,23 4.7,23 H19.3 Q21,23 21,21.3 V19 Z" fill="#0b3640" stroke="#25cdee" stroke-width="2"/><rect x="0" y="7.8" width="26" height="12.4" rx="0.5" fill="#25cdee"/><path d="M3.1,18 V11.2 H6.7 V14.6 H3.1 M11.1,11.2 H14.3 L15.1,12 V16.2 L14.3,17 H11.1 Z M19.3,18 V11.2 H24 M19.3,14.5 H23.2" fill="none" stroke="#0b2f38" stroke-width="2"/></svg></div><div class="t" style="right:544.20px;text-align:right;top:335.15px;font-size:22.5px;line-height:22.5px;color:#e6e6e6;font-weight:700;letter-spacing:1.3px;margin-right:-1.3px;transform:scaleX(1.06);transform-origin:100% 0;">2</div><div class="t" style="right:65.00px;text-align:right;top:335.15px;font-size:22.5px;line-height:22.5px;color:#a0a0a0;font-weight:400;letter-spacing:0.8px;margin-right:-0.8px;">22</div><div class="t" style="left:1542.30px;top:335.15px;font-size:22.5px;line-height:22.5px;color:#e6e6e6;font-weight:400;letter-spacing:0.46px;">Farini_Positioning_Children.pdf</div><div style="position:absolute;left:1465px;top:382px;width:26px;height:24px"><svg class="pdf" width="26" height="24" viewBox="0 0 26 24"><path d="M3,1 H15.6 L21,6.4 V8.5 H3 Z" fill="#0b3640" stroke="#25cdee" stroke-width="2" stroke-linejoin="round"/><path d="M3,19 V21.3 Q3,23 4.7,23 H19.3 Q21,23 21,21.3 V19 Z" fill="#0b3640" stroke="#25cdee" stroke-width="2"/><rect x="0" y="7.8" width="26" height="12.4" rx="0.5" fill="#25cdee"/><path d="M3.1,18 V11.2 H6.7 V14.6 H3.1 M11.1,11.2 H14.3 L15.1,12 V16.2 L14.3,17 H11.1 Z M19.3,18 V11.2 H24 M19.3,14.5 H23.2" fill="none" stroke="#0b2f38" stroke-width="2"/></svg></div><div class="t" style="right:544.20px;text-align:right;top:383.15px;font-size:22.5px;line-height:22.5px;color:#e6e6e6;font-weight:700;letter-spacing:1.3px;margin-right:-1.3px;transform:scaleX(1.06);transform-origin:100% 0;">3</div><div class="t" style="right:65.00px;text-align:right;top:383.15px;font-size:22.5px;line-height:22.5px;color:#a0a0a0;font-weight:400;letter-spacing:0.8px;margin-right:-0.8px;">0</div><div class="t" style="left:1542.30px;top:383.15px;font-size:22.5px;line-height:22.5px;color:#e6e6e6;font-weight:400;letter-spacing:0.456px;">Alamdari_Gender_Metacognitive_Interve...</div><div style="position:absolute;left:1465px;top:430px;width:26px;height:24px"><svg class="pdf" width="26" height="24" viewBox="0 0 26 24"><path d="M3,1 H15.6 L21,6.4 V8.5 H3 Z" fill="#0b3640" stroke="#25cdee" stroke-width="2" stroke-linejoin="round"/><path d="M3,19 V21.3 Q3,23 4.7,23 H19.3 Q21,23 21,21.3 V19 Z" fill="#0b3640" stroke="#25cdee" stroke-width="2"/><rect x="0" y="7.8" width="26" height="12.4" rx="0.5" fill="#25cdee"/><path d="M3.1,18 V11.2 H6.7 V14.6 H3.1 M11.1,11.2 H14.3 L15.1,12 V16.2 L14.3,17 H11.1 Z M19.3,18 V11.2 H24 M19.3,14.5 H23.2" fill="none" stroke="#0b2f38" stroke-width="2"/></svg></div><div class="t" style="right:544.20px;text-align:right;top:431.15px;font-size:22.5px;line-height:22.5px;color:#e6e6e6;font-weight:700;letter-spacing:1.3px;margin-right:-1.3px;transform:scaleX(1.06);transform-origin:100% 0;">4</div><div class="t" style="right:65.00px;text-align:right;top:431.15px;font-size:22.5px;line-height:22.5px;color:#a0a0a0;font-weight:400;letter-spacing:0.8px;margin-right:-0.8px;">1</div><div class="t" style="left:1542.30px;top:431.15px;font-size:22.5px;line-height:22.5px;color:#e6e6e6;font-weight:400;letter-spacing:0.468px;">Barwell_Sourcing_Mathematical_Meanin...</div><div style="position:absolute;left:1465px;top:478px;width:26px;height:24px"><svg class="pdf" width="26" height="24" viewBox="0 0 26 24"><path d="M3,1 H15.6 L21,6.4 V8.5 H3 Z" fill="#0b3640" stroke="#25cdee" stroke-width="2" stroke-linejoin="round"/><path d="M3,19 V21.3 Q3,23 4.7,23 H19.3 Q21,23 21,21.3 V19 Z" fill="#0b3640" stroke="#25cdee" stroke-width="2"/><rect x="0" y="7.8" width="26" height="12.4" rx="0.5" fill="#25cdee"/><path d="M3.1,18 V11.2 H6.7 V14.6 H3.1 M11.1,11.2 H14.3 L15.1,12 V16.2 L14.3,17 H11.1 Z M19.3,18 V11.2 H24 M19.3,14.5 H23.2" fill="none" stroke="#0b2f38" stroke-width="2"/></svg></div><div class="t" style="right:544.20px;text-align:right;top:479.15px;font-size:22.5px;line-height:22.5px;color:#e6e6e6;font-weight:700;letter-spacing:1.3px;margin-right:-1.3px;transform:scaleX(1.06);transform-origin:100% 0;">7</div><div class="t" style="right:65.00px;text-align:right;top:479.15px;font-size:22.5px;line-height:22.5px;color:#a0a0a0;font-weight:400;letter-spacing:0.8px;margin-right:-0.8px;">9</div><div class="t" style="left:1542.30px;top:479.15px;font-size:22.5px;line-height:22.5px;color:#e6e6e6;font-weight:400;letter-spacing:0.536px;">Cross_Citizenship_Practices.pdf</div><div style="position:absolute;left:1465px;top:526px;width:26px;height:24px"><svg class="pdf" width="26" height="24" viewBox="0 0 26 24"><path d="M3,1 H15.6 L21,6.4 V8.5 H3 Z" fill="#0b3640" stroke="#25cdee" stroke-width="2" stroke-linejoin="round"/><path d="M3,19 V21.3 Q3,23 4.7,23 H19.3 Q21,23 21,21.3 V19 Z" fill="#0b3640" stroke="#25cdee" stroke-width="2"/><rect x="0" y="7.8" width="26" height="12.4" rx="0.5" fill="#25cdee"/><path d="M3.1,18 V11.2 H6.7 V14.6 H3.1 M11.1,11.2 H14.3 L15.1,12 V16.2 L14.3,17 H11.1 Z M19.3,18 V11.2 H24 M19.3,14.5 H23.2" fill="none" stroke="#0b2f38" stroke-width="2"/></svg></div><div class="t" style="right:544.20px;text-align:right;top:527.15px;font-size:22.5px;line-height:22.5px;color:#e6e6e6;font-weight:700;letter-spacing:1.3px;margin-right:-1.3px;transform:scaleX(1.06);transform-origin:100% 0;">8</div><div class="t" style="right:65.00px;text-align:right;top:527.15px;font-size:22.5px;line-height:22.5px;color:#a0a0a0;font-weight:400;letter-spacing:0.8px;margin-right:-0.8px;">3</div><div class="t" style="left:1542.30px;top:527.15px;font-size:22.5px;line-height:22.5px;color:#e6e6e6;font-weight:400;letter-spacing:0.55px;">Cui_Thinking_through_Talk.pdf</div><div style="position:absolute;left:1465px;top:574px;width:26px;height:24px"><svg class="pdf" width="26" height="24" viewBox="0 0 26 24"><path d="M3,1 H15.6 L21,6.4 V8.5 H3 Z" fill="#0b3640" stroke="#25cdee" stroke-width="2" stroke-linejoin="round"/><path d="M3,19 V21.3 Q3,23 4.7,23 H19.3 Q21,23 21,21.3 V19 Z" fill="#0b3640" stroke="#25cdee" stroke-width="2"/><rect x="0" y="7.8" width="26" height="12.4" rx="0.5" fill="#25cdee"/><path d="M3.1,18 V11.2 H6.7 V14.6 H3.1 M11.1,11.2 H14.3 L15.1,12 V16.2 L14.3,17 H11.1 Z M19.3,18 V11.2 H24 M19.3,14.5 H23.2" fill="none" stroke="#0b2f38" stroke-width="2"/></svg></div><div class="t" style="right:544.20px;text-align:right;top:575.15px;font-size:22.5px;line-height:22.5px;color:#e6e6e6;font-weight:700;letter-spacing:1.3px;margin-right:-1.3px;transform:scaleX(1.06);transform-origin:100% 0;">9</div><div class="t" style="right:65.00px;text-align:right;top:575.15px;font-size:22.5px;line-height:22.5px;color:#a0a0a0;font-weight:400;letter-spacing:0.8px;margin-right:-0.8px;">5</div><div class="t" style="left:1542.30px;top:575.15px;font-size:22.5px;line-height:22.5px;color:#e6e6e6;font-weight:400;letter-spacing:0.597px;">Filipi_Students_Unsolicited_Initiations.pdf</div><div style="position:absolute;left:1465px;top:622px;width:26px;height:24px"><svg class="pdf" width="26" height="24" viewBox="0 0 26 24"><path d="M3,1 H15.6 L21,6.4 V8.5 H3 Z" fill="#0b3640" stroke="#25cdee" stroke-width="2" stroke-linejoin="round"/><path d="M3,19 V21.3 Q3,23 4.7,23 H19.3 Q21,23 21,21.3 V19 Z" fill="#0b3640" stroke="#25cdee" stroke-width="2"/><rect x="0" y="7.8" width="26" height="12.4" rx="0.5" fill="#25cdee"/><path d="M3.1,18 V11.2 H6.7 V14.6 H3.1 M11.1,11.2 H14.3 L15.1,12 V16.2 L14.3,17 H11.1 Z M19.3,18 V11.2 H24 M19.3,14.5 H23.2" fill="none" stroke="#0b2f38" stroke-width="2"/></svg></div><div class="t" style="right:544.20px;text-align:right;top:623.15px;font-size:22.5px;line-height:22.5px;color:#e6e6e6;font-weight:700;letter-spacing:1.3px;margin-right:-1.3px;transform:scaleX(1.06);transform-origin:100% 0;">10</div><div class="t" style="right:65.00px;text-align:right;top:623.15px;font-size:22.5px;line-height:22.5px;color:#a0a0a0;font-weight:400;letter-spacing:0.8px;margin-right:-0.8px;">4</div><div class="t" style="left:1542.30px;top:623.15px;font-size:22.5px;line-height:22.5px;color:#e6e6e6;font-weight:400;letter-spacing:0.529px;">Fuertes_Interacting_and_Communicatin...</div><div style="position:absolute;left:1465px;top:670px;width:26px;height:24px"><svg class="pdf" width="26" height="24" viewBox="0 0 26 24"><path d="M3,1 H15.6 L21,6.4 V8.5 H3 Z" fill="#0b3640" stroke="#25cdee" stroke-width="2" stroke-linejoin="round"/><path d="M3,19 V21.3 Q3,23 4.7,23 H19.3 Q21,23 21,21.3 V19 Z" fill="#0b3640" stroke="#25cdee" stroke-width="2"/><rect x="0" y="7.8" width="26" height="12.4" rx="0.5" fill="#25cdee"/><path d="M3.1,18 V11.2 H6.7 V14.6 H3.1 M11.1,11.2 H14.3 L15.1,12 V16.2 L14.3,17 H11.1 Z M19.3,18 V11.2 H24 M19.3,14.5 H23.2" fill="none" stroke="#0b2f38" stroke-width="2"/></svg></div><div class="t" style="right:544.20px;text-align:right;top:671.15px;font-size:22.5px;line-height:22.5px;color:#e6e6e6;font-weight:700;letter-spacing:1.3px;margin-right:-1.3px;transform:scaleX(1.06);transform-origin:100% 0;">11</div><div class="t" style="right:65.00px;text-align:right;top:671.15px;font-size:22.5px;line-height:22.5px;color:#a0a0a0;font-weight:400;letter-spacing:0.8px;margin-right:-0.8px;">1</div><div class="t" style="left:1542.30px;top:671.15px;font-size:22.5px;line-height:22.5px;color:#e6e6e6;font-weight:400;letter-spacing:0.557px;">Hahkioniemi_Students_Dialogic.pdf</div><div style="position:absolute;left:1465px;top:718px;width:26px;height:24px"><svg class="pdf" width="26" height="24" viewBox="0 0 26 24"><path d="M3,1 H15.6 L21,6.4 V8.5 H3 Z" fill="#0b3640" stroke="#25cdee" stroke-width="2" stroke-linejoin="round"/><path d="M3,19 V21.3 Q3,23 4.7,23 H19.3 Q21,23 21,21.3 V19 Z" fill="#0b3640" stroke="#25cdee" stroke-width="2"/><rect x="0" y="7.8" width="26" height="12.4" rx="0.5" fill="#25cdee"/><path d="M3.1,18 V11.2 H6.7 V14.6 H3.1 M11.1,11.2 H14.3 L15.1,12 V16.2 L14.3,17 H11.1 Z M19.3,18 V11.2 H24 M19.3,14.5 H23.2" fill="none" stroke="#0b2f38" stroke-width="2"/></svg></div><div class="t" style="right:544.20px;text-align:right;top:719.15px;font-size:22.5px;line-height:22.5px;color:#e6e6e6;font-weight:700;letter-spacing:1.3px;margin-right:-1.3px;transform:scaleX(1.06);transform-origin:100% 0;">13</div><div class="t" style="right:65.00px;text-align:right;top:719.15px;font-size:22.5px;line-height:22.5px;color:#a0a0a0;font-weight:400;letter-spacing:0.8px;margin-right:-0.8px;">13</div><div class="t" style="left:1542.30px;top:719.15px;font-size:22.5px;line-height:22.5px;color:#e6e6e6;font-weight:400;letter-spacing:0.475px;">Karousiou_Teachers_Positioning.pdf</div><div style="position:absolute;left:1465px;top:766px;width:26px;height:24px"><svg class="pdf" width="26" height="24" viewBox="0 0 26 24"><path d="M3,1 H15.6 L21,6.4 V8.5 H3 Z" fill="#0b3640" stroke="#25cdee" stroke-width="2" stroke-linejoin="round"/><path d="M3,19 V21.3 Q3,23 4.7,23 H19.3 Q21,23 21,21.3 V19 Z" fill="#0b3640" stroke="#25cdee" stroke-width="2"/><rect x="0" y="7.8" width="26" height="12.4" rx="0.5" fill="#25cdee"/><path d="M3.1,18 V11.2 H6.7 V14.6 H3.1 M11.1,11.2 H14.3 L15.1,12 V16.2 L14.3,17 H11.1 Z M19.3,18 V11.2 H24 M19.3,14.5 H23.2" fill="none" stroke="#0b2f38" stroke-width="2"/></svg></div><div class="t" style="right:544.20px;text-align:right;top:767.15px;font-size:22.5px;line-height:22.5px;color:#e6e6e6;font-weight:700;letter-spacing:1.3px;margin-right:-1.3px;transform:scaleX(1.06);transform-origin:100% 0;">14</div><div class="t" style="right:65.00px;text-align:right;top:767.15px;font-size:22.5px;line-height:22.5px;color:#a0a0a0;font-weight:400;letter-spacing:0.8px;margin-right:-0.8px;">24</div><div class="t" style="left:1542.30px;top:767.15px;font-size:22.5px;line-height:22.5px;color:#e6e6e6;font-weight:400;letter-spacing:0.634px;">Kim_Student_Agency.pdf</div><div style="position:absolute;left:1465px;top:814px;width:26px;height:24px"><svg class="pdf" width="26" height="24" viewBox="0 0 26 24"><path d="M3,1 H15.6 L21,6.4 V8.5 H3 Z" fill="#0b3640" stroke="#25cdee" stroke-width="2" stroke-linejoin="round"/><path d="M3,19 V21.3 Q3,23 4.7,23 H19.3 Q21,23 21,21.3 V19 Z" fill="#0b3640" stroke="#25cdee" stroke-width="2"/><rect x="0" y="7.8" width="26" height="12.4" rx="0.5" fill="#25cdee"/><path d="M3.1,18 V11.2 H6.7 V14.6 H3.1 M11.1,11.2 H14.3 L15.1,12 V16.2 L14.3,17 H11.1 Z M19.3,18 V11.2 H24 M19.3,14.5 H23.2" fill="none" stroke="#0b2f38" stroke-width="2"/></svg></div><div class="t" style="right:544.20px;text-align:right;top:815.15px;font-size:22.5px;line-height:22.5px;color:#e6e6e6;font-weight:700;letter-spacing:1.3px;margin-right:-1.3px;transform:scaleX(1.06);transform-origin:100% 0;">15</div><div class="t" style="right:65.00px;text-align:right;top:815.15px;font-size:22.5px;line-height:22.5px;color:#a0a0a0;font-weight:400;letter-spacing:0.8px;margin-right:-0.8px;">4</div><div class="t" style="left:1542.30px;top:815.15px;font-size:22.5px;line-height:22.5px;color:#e6e6e6;font-weight:400;letter-spacing:0.474px;">Kontovourki_Vibrancy_and_Stillness.pdf</div><div style="position:absolute;left:1465px;top:862px;width:26px;height:24px"><svg class="pdf" width="26" height="24" viewBox="0 0 26 24"><path d="M3,1 H15.6 L21,6.4 V8.5 H3 Z" fill="#0b3640" stroke="#25cdee" stroke-width="2" stroke-linejoin="round"/><path d="M3,19 V21.3 Q3,23 4.7,23 H19.3 Q21,23 21,21.3 V19 Z" fill="#0b3640" stroke="#25cdee" stroke-width="2"/><rect x="0" y="7.8" width="26" height="12.4" rx="0.5" fill="#25cdee"/><path d="M3.1,18 V11.2 H6.7 V14.6 H3.1 M11.1,11.2 H14.3 L15.1,12 V16.2 L14.3,17 H11.1 Z M19.3,18 V11.2 H24 M19.3,14.5 H23.2" fill="none" stroke="#0b2f38" stroke-width="2"/></svg></div><div class="t" style="right:544.20px;text-align:right;top:863.15px;font-size:22.5px;line-height:22.5px;color:#e6e6e6;font-weight:700;letter-spacing:1.3px;margin-right:-1.3px;transform:scaleX(1.06);transform-origin:100% 0;">16</div><div class="t" style="right:65.00px;text-align:right;top:863.15px;font-size:22.5px;line-height:22.5px;color:#a0a0a0;font-weight:400;letter-spacing:0.8px;margin-right:-0.8px;">5</div><div class="t" style="left:1542.30px;top:863.15px;font-size:22.5px;line-height:22.5px;color:#e6e6e6;font-weight:400;letter-spacing:0.508px;">Lehesvuori_Teacher_Orchestration.pdf</div><div style="position:absolute;left:1465px;top:910px;width:26px;height:24px"><svg class="pdf" width="26" height="24" viewBox="0 0 26 24"><path d="M3,1 H15.6 L21,6.4 V8.5 H3 Z" fill="#0b3640" stroke="#25cdee" stroke-width="2" stroke-linejoin="round"/><path d="M3,19 V21.3 Q3,23 4.7,23 H19.3 Q21,23 21,21.3 V19 Z" fill="#0b3640" stroke="#25cdee" stroke-width="2"/><rect x="0" y="7.8" width="26" height="12.4" rx="0.5" fill="#25cdee"/><path d="M3.1,18 V11.2 H6.7 V14.6 H3.1 M11.1,11.2 H14.3 L15.1,12 V16.2 L14.3,17 H11.1 Z M19.3,18 V11.2 H24 M19.3,14.5 H23.2" fill="none" stroke="#0b2f38" stroke-width="2"/></svg></div><div class="t" style="right:544.20px;text-align:right;top:911.15px;font-size:22.5px;line-height:22.5px;color:#e6e6e6;font-weight:700;letter-spacing:1.3px;margin-right:-1.3px;transform:scaleX(1.06);transform-origin:100% 0;">18</div><div class="t" style="right:65.00px;text-align:right;top:911.15px;font-size:22.5px;line-height:22.5px;color:#a0a0a0;font-weight:400;letter-spacing:0.8px;margin-right:-0.8px;">8</div><div class="t" style="left:1542.30px;top:911.15px;font-size:22.5px;line-height:22.5px;color:#e6e6e6;font-weight:400;letter-spacing:0.659px;">Mochizuki_Mediating_and_Perspective-t...</div><div style="position:absolute;left:1465px;top:958px;width:26px;height:24px"><svg class="pdf" width="26" height="24" viewBox="0 0 26 24"><path d="M3,1 H15.6 L21,6.4 V8.5 H3 Z" fill="#0b3640" stroke="#25cdee" stroke-width="2" stroke-linejoin="round"/><path d="M3,19 V21.3 Q3,23 4.7,23 H19.3 Q21,23 21,21.3 V19 Z" fill="#0b3640" stroke="#25cdee" stroke-width="2"/><rect x="0" y="7.8" width="26" height="12.4" rx="0.5" fill="#25cdee"/><path d="M3.1,18 V11.2 H6.7 V14.6 H3.1 M11.1,11.2 H14.3 L15.1,12 V16.2 L14.3,17 H11.1 Z M19.3,18 V11.2 H24 M19.3,14.5 H23.2" fill="none" stroke="#0b2f38" stroke-width="2"/></svg></div><div class="t" style="right:544.20px;text-align:right;top:959.15px;font-size:22.5px;line-height:22.5px;color:#e6e6e6;font-weight:700;letter-spacing:1.3px;margin-right:-1.3px;transform:scaleX(1.06);transform-origin:100% 0;">19</div><div class="t" style="right:65.00px;text-align:right;top:959.15px;font-size:22.5px;line-height:22.5px;color:#a0a0a0;font-weight:400;letter-spacing:0.8px;margin-right:-0.8px;">2</div><div class="t" style="left:1542.30px;top:959.15px;font-size:22.5px;line-height:22.5px;color:#e6e6e6;font-weight:400;letter-spacing:0.405px;">Rapanta_Walton&#39;s_Types_of_Argumentat...</div><div style="position:absolute;left:1465px;top:1006px;width:26px;height:24px"><svg class="pdf" width="26" height="24" viewBox="0 0 26 24"><path d="M3,1 H15.6 L21,6.4 V8.5 H3 Z" fill="#0b3640" stroke="#25cdee" stroke-width="2" stroke-linejoin="round"/><path d="M3,19 V21.3 Q3,23 4.7,23 H19.3 Q21,23 21,21.3 V19 Z" fill="#0b3640" stroke="#25cdee" stroke-width="2"/><rect x="0" y="7.8" width="26" height="12.4" rx="0.5" fill="#25cdee"/><path d="M3.1,18 V11.2 H6.7 V14.6 H3.1 M11.1,11.2 H14.3 L15.1,12 V16.2 L14.3,17 H11.1 Z M19.3,18 V11.2 H24 M19.3,14.5 H23.2" fill="none" stroke="#0b2f38" stroke-width="2"/></svg></div><div class="t" style="right:544.20px;text-align:right;top:1007.15px;font-size:22.5px;line-height:22.5px;color:#e6e6e6;font-weight:700;letter-spacing:1.3px;margin-right:-1.3px;transform:scaleX(1.06);transform-origin:100% 0;">20</div><div class="t" style="right:65.00px;text-align:right;top:1007.15px;font-size:22.5px;line-height:22.5px;color:#a0a0a0;font-weight:400;letter-spacing:0.8px;margin-right:-0.8px;">20</div><div class="t" style="left:1542.30px;top:1007.15px;font-size:22.5px;line-height:22.5px;color:#e6e6e6;font-weight:400;letter-spacing:0.552px;">Santiago-Garabieta_Inclusion_of_L2.pdf</div><div style="position:absolute;left:1465px;top:1054px;width:26px;height:24px"><svg class="pdf" width="26" height="24" viewBox="0 0 26 24"><path d="M3,1 H15.6 L21,6.4 V8.5 H3 Z" fill="#0b3640" stroke="#25cdee" stroke-width="2" stroke-linejoin="round"/><path d="M3,19 V21.3 Q3,23 4.7,23 H19.3 Q21,23 21,21.3 V19 Z" fill="#0b3640" stroke="#25cdee" stroke-width="2"/><rect x="0" y="7.8" width="26" height="12.4" rx="0.5" fill="#25cdee"/><path d="M3.1,18 V11.2 H6.7 V14.6 H3.1 M11.1,11.2 H14.3 L15.1,12 V16.2 L14.3,17 H11.1 Z M19.3,18 V11.2 H24 M19.3,14.5 H23.2" fill="none" stroke="#0b2f38" stroke-width="2"/></svg></div><div class="t" style="right:544.20px;text-align:right;top:1055.15px;font-size:22.5px;line-height:22.5px;color:#e6e6e6;font-weight:700;letter-spacing:1.3px;margin-right:-1.3px;transform:scaleX(1.06);transform-origin:100% 0;">21</div><div class="t" style="right:65.00px;text-align:right;top:1055.15px;font-size:22.5px;line-height:22.5px;color:#a0a0a0;font-weight:400;letter-spacing:0.8px;margin-right:-0.8px;">2</div><div class="t" style="left:1542.30px;top:1055.15px;font-size:22.5px;line-height:22.5px;color:#e6e6e6;font-weight:400;letter-spacing:0.458px;">Shepard-Carey_Creating_Space.pdf</div><div style="position:absolute;left:1465px;top:1102px;width:26px;height:24px"><svg class="pdf" width="26" height="24" viewBox="0 0 26 24"><path d="M3,1 H15.6 L21,6.4 V8.5 H3 Z" fill="#0b3640" stroke="#25cdee" stroke-width="2" stroke-linejoin="round"/><path d="M3,19 V21.3 Q3,23 4.7,23 H19.3 Q21,23 21,21.3 V19 Z" fill="#0b3640" stroke="#25cdee" stroke-width="2"/><rect x="0" y="7.8" width="26" height="12.4" rx="0.5" fill="#25cdee"/><path d="M3.1,18 V11.2 H6.7 V14.6 H3.1 M11.1,11.2 H14.3 L15.1,12 V16.2 L14.3,17 H11.1 Z M19.3,18 V11.2 H24 M19.3,14.5 H23.2" fill="none" stroke="#0b2f38" stroke-width="2"/></svg></div><div class="t" style="right:544.20px;text-align:right;top:1103.15px;font-size:22.5px;line-height:22.5px;color:#e6e6e6;font-weight:700;letter-spacing:1.3px;margin-right:-1.3px;transform:scaleX(1.06);transform-origin:100% 0;">22</div><div class="t" style="right:65.00px;text-align:right;top:1103.15px;font-size:22.5px;line-height:22.5px;color:#a0a0a0;font-weight:400;letter-spacing:0.8px;margin-right:-0.8px;">2</div><div class="t" style="left:1542.30px;top:1103.15px;font-size:22.5px;line-height:22.5px;color:#e6e6e6;font-weight:400;letter-spacing:0.367px;">Soysal_Exploring_Prospective_Classroo...</div><div style="position:absolute;left:1465px;top:1150px;width:26px;height:24px"><svg class="pdf" width="26" height="24" viewBox="0 0 26 24"><path d="M3,1 H15.6 L21,6.4 V8.5 H3 Z" fill="#0b3640" stroke="#25cdee" stroke-width="2" stroke-linejoin="round"/><path d="M3,19 V21.3 Q3,23 4.7,23 H19.3 Q21,23 21,21.3 V19 Z" fill="#0b3640" stroke="#25cdee" stroke-width="2"/><rect x="0" y="7.8" width="26" height="12.4" rx="0.5" fill="#25cdee"/><path d="M3.1,18 V11.2 H6.7 V14.6 H3.1 M11.1,11.2 H14.3 L15.1,12 V16.2 L14.3,17 H11.1 Z M19.3,18 V11.2 H24 M19.3,14.5 H23.2" fill="none" stroke="#0b2f38" stroke-width="2"/></svg></div><div class="t" style="right:544.20px;text-align:right;top:1151.15px;font-size:22.5px;line-height:22.5px;color:#e6e6e6;font-weight:700;letter-spacing:1.3px;margin-right:-1.3px;transform:scaleX(1.06);transform-origin:100% 0;">25</div><div class="t" style="right:65.00px;text-align:right;top:1151.15px;font-size:22.5px;line-height:22.5px;color:#a0a0a0;font-weight:400;letter-spacing:0.8px;margin-right:-0.8px;">1</div><div class="t" style="left:1542.30px;top:1151.15px;font-size:22.5px;line-height:22.5px;color:#e6e6e6;font-weight:400;letter-spacing:0.493px;">Xu_Teacher_Orchestration.pdf</div><div style="position:absolute;left:1465px;top:1198px;width:26px;height:24px"><svg class="pdf" width="26" height="24" viewBox="0 0 26 24"><path d="M3,1 H15.6 L21,6.4 V8.5 H3 Z" fill="#0b3640" stroke="#25cdee" stroke-width="2" stroke-linejoin="round"/><path d="M3,19 V21.3 Q3,23 4.7,23 H19.3 Q21,23 21,21.3 V19 Z" fill="#0b3640" stroke="#25cdee" stroke-width="2"/><rect x="0" y="7.8" width="26" height="12.4" rx="0.5" fill="#25cdee"/><path d="M3.1,18 V11.2 H6.7 V14.6 H3.1 M11.1,11.2 H14.3 L15.1,12 V16.2 L14.3,17 H11.1 Z M19.3,18 V11.2 H24 M19.3,14.5 H23.2" fill="none" stroke="#0b2f38" stroke-width="2"/></svg></div><div class="t" style="right:544.20px;text-align:right;top:1199.15px;font-size:22.5px;line-height:22.5px;color:#e6e6e6;font-weight:700;letter-spacing:1.3px;margin-right:-1.3px;transform:scaleX(1.06);transform-origin:100% 0;">26</div><div class="t" style="right:65.00px;text-align:right;top:1199.15px;font-size:22.5px;line-height:22.5px;color:#a0a0a0;font-weight:400;letter-spacing:0.8px;margin-right:-0.8px;">0</div><div class="t" style="left:1542.30px;top:1199.15px;font-size:22.5px;line-height:22.5px;color:#e6e6e6;font-weight:400;letter-spacing:0.413px;">Yuceer_Implementation_of_Dialogic_Tea...</div></body></html>
